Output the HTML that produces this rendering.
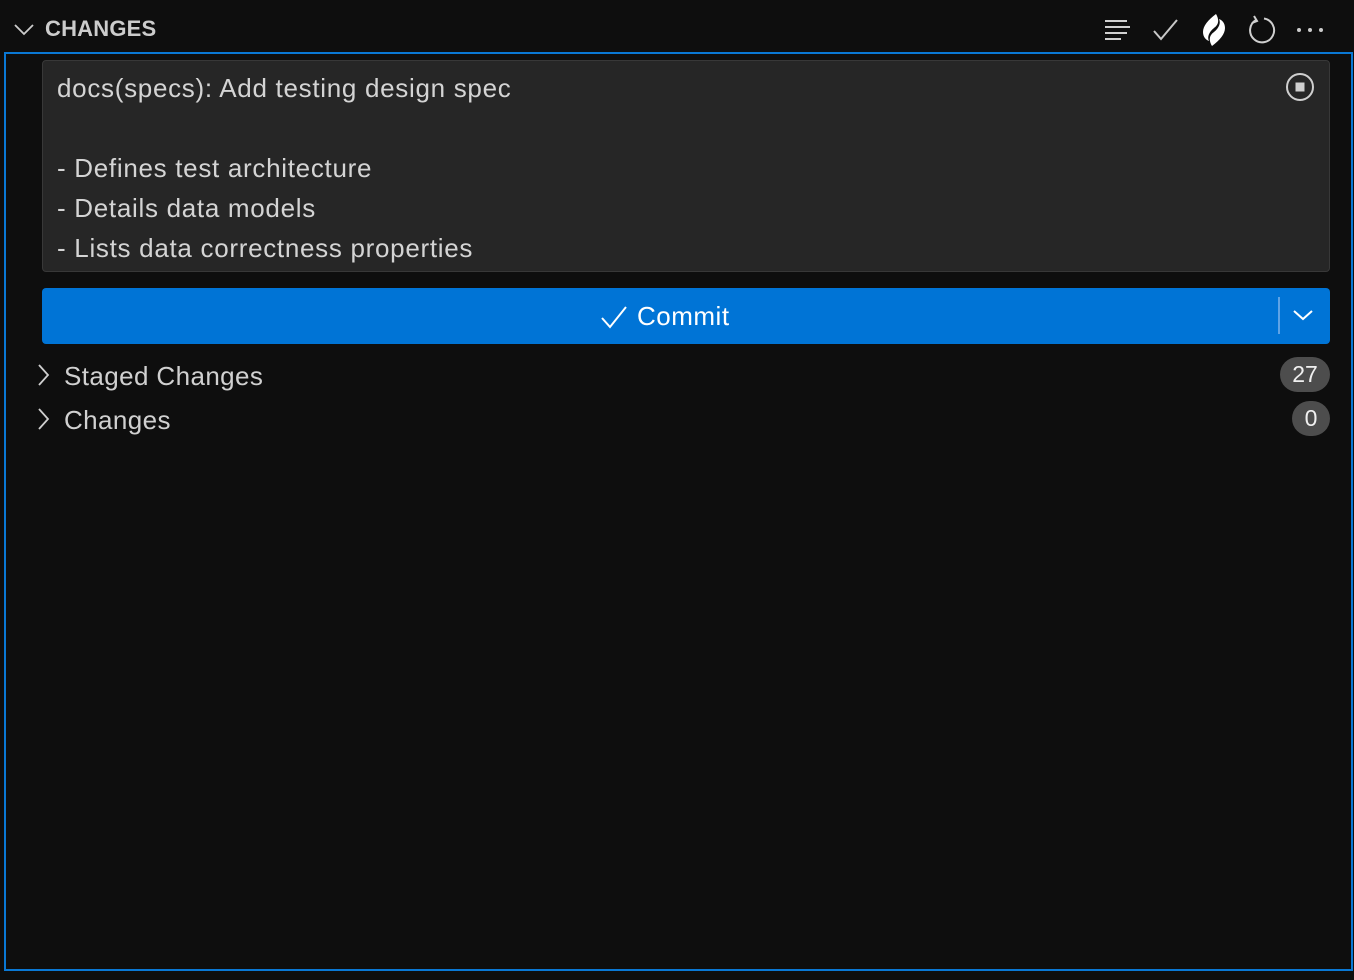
<!DOCTYPE html>
<html><head><meta charset="utf-8"><style>
*{margin:0;padding:0;box-sizing:border-box}
body{width:1354px;height:980px;background:#0e0e0e;position:relative;overflow:hidden;font-family:"Liberation Sans",sans-serif;color:#d0d0d0}
.abs{position:absolute}
.hdr{left:45px;top:16px;font-size:22px;font-weight:bold;color:#cccccc;letter-spacing:0.2px}
.frame{left:4px;top:52px;width:1349px;height:919px;border:2px solid #0a78d4}
.box{left:42px;top:60px;width:1288px;height:212px;background:#262626;border:1px solid #383838;border-radius:4px}
.txt{left:57px;font-size:26px;color:#d4d4d4;line-height:40px;letter-spacing:0.7px}
.btn{left:42px;top:288px;width:1288px;height:56px;background:#0074d6;border-radius:4px}
.row{left:64px;font-size:26px;color:#d0d0d0;letter-spacing:0.4px}
.badge{background:#4d4d4d;color:#f0f0f0;font-size:23px;height:35px;border-radius:18px;text-align:center;line-height:35px}
</style></head><body>
<svg class="abs" style="left:13px;top:22px" width="22" height="14" viewBox="0 0 22 14"><path d="M2 3l9 9 9-9" stroke="#ccc" stroke-width="1.8" fill="none"/></svg>
<div class="abs hdr">CHANGES</div>
<svg class="abs" style="left:1104px;top:18px" width="26" height="24"><g stroke="#d0d0d0" stroke-width="2"><path d="M1 3h22M1 9h25M1 15h22M1 21h16"/></g></svg>
<svg class="abs" style="left:1152px;top:18px" width="28" height="24"><path d="M2 13l7 8L25 2" stroke="#c8c8c8" stroke-width="2" fill="none"/></svg>
<svg class="abs" style="left:1200px;top:12px" width="28" height="36" viewBox="0 0 28 36"><path d="M16 2C8 8 3 14 3 20c0 5 3 8 6 9-2-4 0-9 5-13 4-3 6-7 2-14zM12 34c8-6 13-12 13-18 0-5-3-8-6-9 2 4 0 9-5 13-4 3-6 7-2 14z" fill="#ffffff"/></svg>
<svg class="abs" style="left:1246px;top:14px" width="32" height="32" viewBox="0 0 32 32"><path d="M10 6A12 12 0 1 0 18 4.5" stroke="#cfcfcf" stroke-width="2" fill="none"/><path d="M8 2l3 5-5 2" stroke="#cfcfcf" stroke-width="2" fill="none"/></svg>
<svg class="abs" style="left:1296px;top:26px" width="30" height="8"><circle cx="3" cy="4" r="2" fill="#ccc"/><circle cx="14" cy="4" r="2" fill="#ccc"/><circle cx="25" cy="4" r="2" fill="#ccc"/></svg>
<div class="abs frame"></div>
<div class="abs box"></div>
<div class="abs txt" style="top:68px">docs(specs): Add testing design spec</div>
<div class="abs txt" style="top:148px">- Defines test architecture</div>
<div class="abs txt" style="top:188px">- Details data models</div>
<div class="abs txt" style="top:228px">- Lists data correctness properties</div>
<svg class="abs" style="left:1284px;top:71px" width="32" height="32"><circle cx="16" cy="16" r="13" stroke="#cfcfcf" stroke-width="2" fill="none"/><rect x="11.5" y="11.5" width="9" height="9" fill="#cfcfcf"/></svg>
<div class="abs btn"></div>
<svg class="abs" style="left:599px;top:304px" width="30" height="26"><path d="M3 14l8 9L27 3" stroke="#fff" stroke-width="2" fill="none"/></svg>
<div class="abs" style="left:637px;top:301px;font-size:26px;color:#fff;letter-spacing:0.5px">Commit</div>
<div class="abs" style="left:1278px;top:297px;width:2px;height:37px;background:#5ea3e6"></div>
<svg class="abs" style="left:1292px;top:308px" width="22" height="14"><path d="M2 3l9 8 9-8" stroke="#fff" stroke-width="2" fill="none"/></svg>
<svg class="abs" style="left:36px;top:363px" width="14" height="24"><path d="M3 2l9 10-9 10" stroke="#cfcfcf" stroke-width="1.8" fill="none"/></svg>
<div class="abs row" style="top:361px">Staged Changes</div>
<svg class="abs" style="left:36px;top:407px" width="14" height="24"><path d="M3 2l9 10-9 10" stroke="#cfcfcf" stroke-width="1.8" fill="none"/></svg>
<div class="abs row" style="top:405px">Changes</div>
<div class="abs badge" style="left:1280px;top:357px;width:50px">27</div>
<div class="abs badge" style="left:1292px;top:401px;width:38px">0</div>
</body></html>
